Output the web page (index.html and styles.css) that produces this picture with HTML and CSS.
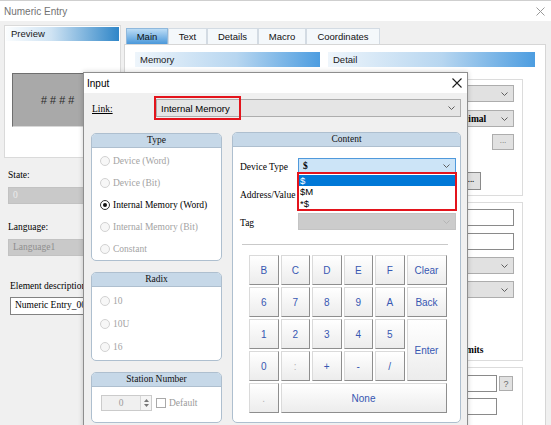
FILE: index.html
```html
<!DOCTYPE html>
<html>
<head>
<meta charset="utf-8">
<title>Numeric Entry</title>
<link rel="stylesheet" href="styles.css">
</head>
<body>
<div class="win">
  <div class="win-title">
    <span>Numeric Entry</span>
    <svg class="x-gray" width="9" height="9" viewBox="0 0 9 9"><path d="M0.5 0.5L8.5 8.5M8.5 0.5L0.5 8.5"/></svg>
  </div>
  <div class="win-body">
    <div class="side">
      <div class="preview">
        <div class="grad-hdr">Preview</div>
        <div class="preview-box">####</div>
      </div>
      <div class="f-label first">State:</div>
      <div class="f-input gray light">0</div>
      <div class="f-label">Language:</div>
      <div class="f-input gray">Language1</div>
      <div class="f-label desc">Element description:</div>
      <div class="f-input white">Numeric Entry_001</div>
    </div>
    <div class="main">
      <div class="tabs">
        <div class="tab active t-main">Main</div>
        <div class="tab t-text">Text</div>
        <div class="tab t-details">Details</div>
        <div class="tab t-macro">Macro</div>
        <div class="tab t-coord">Coordinates</div>
      </div>
      <div class="panel">
        <div class="col">
          <div class="sec-hdr">Memory</div>
        </div>
        <div class="col">
          <div class="sec-hdr">Detail</div>
          <div class="gbox box-a">
            <div class="row"><div class="dd wide"><span></span><svg class="chev" viewBox="0 0 7 4"><path d="M0.5 0.5L3.5 3.5L6.5 0.5"/></svg></div></div>
            <div class="row r2"><div class="dd narrow"><span class="ddt">Decimal</span><svg class="chev" viewBox="0 0 7 4"><path d="M0.5 0.5L3.5 3.5L6.5 0.5"/></svg></div></div>
            <div class="row r3"><div class="btn dots">...</div></div>
            <div class="row r4"><div class="btn dots small">...</div></div>
          </div>
          <div class="gbox box-b">
            <div class="row"><div class="txt wide"></div></div>
            <div class="row r2b"><div class="txt wide"></div></div>
            <div class="row r2b"><div class="dd wide"><span></span><svg class="chev" viewBox="0 0 7 4"><path d="M0.5 0.5L3.5 3.5L6.5 0.5"/></svg></div></div>
            <div class="row r2b"><div class="dd wide"><span></span><svg class="chev" viewBox="0 0 7 4"><path d="M0.5 0.5L3.5 3.5L6.5 0.5"/></svg></div></div>
            <div class="row lim"><span class="lim-t">Limits</span></div>
          </div>
          <div class="gbox box-c">
            <div class="row rc1"><div class="txt mid"></div><div class="btn q">?</div></div>
            <div class="row rc2"><div class="txt mid"></div></div>
          </div>
        </div>
      </div>
    </div>
  </div>
</div>

<div class="dlg">
  <div class="dlg-title">
    <span>Input</span>
    <svg class="x-dark" width="10" height="10" viewBox="0 0 10 10"><path d="M0.5 0.5L9.5 9.5M9.5 0.5L0.5 9.5"/></svg>
  </div>
  <div class="dlg-body">
    <div class="link-row">
      <span class="link-label">Link:</span>
      <div class="dd link-dd"><span>Internal Memory</span><svg class="chev" viewBox="0 0 7 4"><path d="M0.5 0.5L3.5 3.5L6.5 0.5"/></svg></div>
      <div class="red-mark link-mark"></div>
    </div>
    <div class="groups">
      <div class="left-col">
        <div class="grp g-type">
          <div class="grp-hdr">Type</div>
          <div class="grp-body list">
            <div class="radio dis"><span class="rc"></span>Device (Word)</div>
            <div class="radio dis"><span class="rc"></span>Device (Bit)</div>
            <div class="radio on"><span class="rc"></span>Internal Memory (Word)</div>
            <div class="radio dis"><span class="rc"></span>Internal Memory (Bit)</div>
            <div class="radio dis"><span class="rc"></span>Constant</div>
          </div>
        </div>
        <div class="grp g-radix">
          <div class="grp-hdr">Radix</div>
          <div class="grp-body list2">
            <div class="radio dis r23"><span class="rc"></span>10</div>
            <div class="radio dis r23"><span class="rc"></span>10U</div>
            <div class="radio dis r23"><span class="rc"></span>16</div>
          </div>
        </div>
        <div class="grp g-station">
          <div class="grp-hdr">Station Number</div>
          <div class="grp-body station">
            <div class="spin">
              <span class="spin-v">0</span>
              <span class="spin-btns">
                <svg width="5" height="3" viewBox="0 0 5 3"><path d="M0 3L2.5 0L5 3Z"/></svg>
                <svg width="5" height="3" viewBox="0 0 5 3"><path d="M0 0L2.5 3L5 0Z"/></svg>
              </span>
            </div>
            <span class="chk"></span>
            <span class="chk-l">Default</span>
          </div>
        </div>
      </div>
      <div class="grp g-content">
        <div class="grp-hdr">Content</div>
        <div class="grp-body content">
          <div class="c-row">
            <span class="c-label">Device Type</span>
            <div class="dd blue-dd">
              <span>$</span><svg class="chev" viewBox="0 0 7 4"><path d="M0.5 0.5L3.5 3.5L6.5 0.5"/></svg>
              <div class="dd-list">
                <div class="opt sel">$</div>
                <div class="opt">$M</div>
                <div class="opt">*$</div>
              </div>
            </div>
          </div>
          <div class="c-row">
            <span class="c-label">Address/Value</span>
            <div class="txt c-input"></div>
          </div>
          <div class="c-row">
            <span class="c-label">Tag</span>
            <div class="dd tag-dd"><span></span><svg class="chev light" viewBox="0 0 7 4"><path d="M0.5 0.5L3.5 3.5L6.5 0.5"/></svg></div>
          </div>
          <div class="sep"></div>
          <div class="keys">
            <div class="k">B</div><div class="k">C</div><div class="k">D</div><div class="k">E</div><div class="k">F</div><div class="k">Clear</div>
            <div class="k">6</div><div class="k">7</div><div class="k">8</div><div class="k">9</div><div class="k">A</div><div class="k">Back</div>
            <div class="k">1</div><div class="k">2</div><div class="k">3</div><div class="k">4</div><div class="k">5</div><div class="k enter">Enter</div>
            <div class="k">0</div><div class="k off">:</div><div class="k">+</div><div class="k">-</div><div class="k">/</div>
            <div class="k off">.</div><div class="k none">None</div>
          </div>
        </div>
      </div>
    </div>
  </div>
</div>
</body>
</html>
```

FILE: styles.css
```css
* { box-sizing: border-box; }
html, body { margin: 0; padding: 0; }
body {
  width: 551px;
  height: 425px;
  overflow: hidden;
  position: relative;
  background: #f0f0f0;
  font-family: "Liberation Sans", Arial, sans-serif;
  font-size: 9.5px;
  color: #000;
}

/* ---------- background window ---------- */
.win { height: 425px; display: flex; flex-direction: column; }
.win-title {
  height: 21px;
  flex: none;
  background: #fff;
  border-top: 1px solid #cfcfcf;
  display: flex;
  align-items: center;
  justify-content: space-between;
  padding: 0 6px 0 4px;
  color: #727272;
  font-size: 10px;
}
.x-gray path { stroke: #9a9a9a; stroke-width: 1; fill: none; }
.x-dark path { stroke: #1e1e1e; stroke-width: 1.1; fill: none; }

.win-body { flex: 1; display: flex; gap: 3px; padding: 4px 5px 0 4px; }

.side { width: 117px; flex: none; display: flex; flex-direction: column; }
.preview {
  height: 133px;
  background: #fff;
  border: 1px solid #dadada;
  padding: 1px;
}
.grad-hdr {
  height: 14px;
  line-height: 14px;
  padding-left: 5px;
  background: linear-gradient(to right, #fbfdfe 0%, #cfe3f3 40%, #2f86c8 100%);
  color: #1a1a1a;
}
.preview-box {
  margin: 32px 0 0 6px;
  width: 90px;
  height: 54px;
  background: #a9a9a9;
  border: 1px solid #6f6f6f;
  border-right-color: #d8d8d8;
  border-bottom-color: #d8d8d8;
  display: flex;
  align-items: center;
  justify-content: center;
  font-style: italic;
  font-size: 11px;
  letter-spacing: 3px;
  color: #2a2a2a;
  padding-left: 4px;
}
.f-label {
  font-family: "Liberation Serif", "Times New Roman", serif;
  height: 12px;
  line-height: 12px;
  margin: 17px 0 0 4px;
}
.f-label.first { margin-top: 11px; }
.f-label.desc { margin-top: 24px; margin-left: 6px; }
.f-input {
  font-family: "Liberation Serif", "Times New Roman", serif;
  height: 17px;
  line-height: 15px;
  margin: 6px 0 0 4px;
  padding-left: 4px;
}
.f-input.gray { background: #c9c9c9; color: #8e8e8e; border: 1px solid #c2c2c2; }
.f-input.gray.light { color: #ececec; }
.f-input.white { background: #fff; border: 1px solid #828282; height: 18px; margin-left: 6px; margin-top: 5px; }

.main { flex: 1; display: flex; flex-direction: column; padding-top: 3px; }
.tabs { display: flex; height: 16px; margin-left: 2px; }
.tab {
  height: 16px;
  line-height: 15px;
  text-align: center;
  background: #f4f8fb;
  border: 1px solid #d3dbe3;
  border-bottom: none;
  color: #111;
}
.tab.active {
  background: linear-gradient(#bcdcf5, #4a98da);
  border-color: #8fb8dc;
}
.t-main { width: 42px; }
.t-text { width: 39px; }
.t-details { width: 51px; }
.t-macro { width: 48px; }
.t-coord { width: 74px; }

.panel {
  flex: 1;
  background: #fff;
  border: 1px solid #d6d6d6;
  display: grid;
  grid-template-columns: 185px 207px;
  column-gap: 8px;
  align-items: start;
  padding: 7px 10px 0 10px;
}
.col { display: flex; flex-direction: column; }
.sec-hdr {
  height: 15px;
  line-height: 15px;
  padding-left: 5px;
  background: linear-gradient(to right, #eef5fb 0%, #b7d6f0 55%, #4d9de0 100%);
  color: #1a1a1a;
}
.gbox {
  margin: 6px 12px 0 8px;
  border: 1px solid #dcdcdc;
  background: #fff;
  display: flex;
  flex-direction: column;
  padding: 5px 8px 0 0;
}
.box-a { margin-top: 12px; height: 117px; }
.box-b { height: 159px; padding-top: 6px; }
.box-c { height: 70px; padding-top: 7px; }
.row { display: flex; justify-content: flex-end; align-items: center; }
.r2 { margin-top: 8px; }
.r3 { margin-top: 7px; }
.r4 { margin-top: 22px; padding-right: 33px; }
.r2b { margin-top: 7px; }
.lim { margin-top: 46px; justify-content: flex-start; padding-left: 120px; }
.lim-t { font-family: "Liberation Serif", serif; font-weight: bold; line-height: 12px; }
.rc1 { gap: 2px; padding-right: 1px; }
.rc2 { margin-top: 6px; padding-right: 17px; }

.dd {
  display: flex;
  align-items: center;
  justify-content: space-between;
  height: 17px;
  background: #e1e1e1;
  border: 1px solid #adadad;
  padding: 0 5px 0 3px;
  position: relative;
}
.dd.wide { width: 150px; }
.dd.narrow { width: 65px; padding-left: 3px; }
.ddt { font-family: "Liberation Serif", serif; font-weight: bold; }
.chev { width: 7px; height: 4px; flex: none; }
.chev path { fill: none; stroke: #5e5e5e; stroke-width: 1; }
.chev.light path { stroke: #b5b5b5; }
.txt { height: 17px; background: #fff; border: 1px solid #8a8a8a; }
.txt.wide { width: 150px; }
.txt.mid { width: 130px; height: 17px; }
.btn {
  display: flex;
  align-items: center;
  justify-content: center;
  background: #e1e1e1;
  border: 1px solid #adadad;
  color: #6a6a6a;
}
.btn.dots { width: 22px; height: 16px; font-size: 8px; padding-bottom: 3px; }
.btn.dots.small { width: 20px; height: 18px; color: #333; font-weight: bold; border-color: #8a8a8a; }
.btn.q { width: 14px; height: 15px; font-size: 9px; }

/* ---------- Input dialog ---------- */
.dlg {
  position: absolute;
  left: 83px;
  top: 72px;
  width: 385px;
  height: 370px;
  background: #f0f0f0;
  border: 1px solid #8e8e8e;
  box-shadow: 0 0 5px rgba(0, 0, 0, 0.2);
  display: flex;
  flex-direction: column;
}
.dlg-title {
  height: 20px;
  flex: none;
  background: #fff;
  display: flex;
  align-items: center;
  justify-content: space-between;
  padding: 0 5px 0 3px;
  font-size: 10px;
}
.dlg-body { padding: 6px 6px 0 7px; display: flex; flex-direction: column; }
.link-row { display: flex; align-items: center; height: 18px; position: relative; }
.link-label {
  width: 65px;
  padding-left: 1px;
  font-family: "Liberation Serif", serif;
  text-decoration: underline;
  padding-top: 2px;
}
.link-dd { flex: 1; height: 18px; background: #e5e5e5; padding-left: 4px; }
.red-mark {
  position: absolute;
  border: 2px solid #e3141c;
  pointer-events: none;
}
.link-mark { left: 63px; top: -3px; width: 87px; height: 24px; }

.groups { display: flex; gap: 10px; margin-top: 15px; align-items: flex-start; }
.left-col { width: 131px; display: flex; flex-direction: column; gap: 11px; margin-top: 1px; }
.grp {
  background: #fff;
  border: 1px solid #aebfcf;
  border-radius: 5px;
  overflow: hidden;
  display: flex;
  flex-direction: column;
}
.grp-hdr {
  height: 14px;
  line-height: 13px;
  text-align: center;
  background: #c6d8e8;
  border-bottom: 1px solid #aebfcf;
  font-family: "Liberation Serif", serif;
  color: #111;
}
.grp-body { font-family: "Liberation Serif", serif; }
.g-type { height: 128px; }
.g-radix { height: 89px; }
.g-station { height: 51px; }
.g-content { width: 229px; height: 291px; }

.list { padding-top: 2px; }
.list2 { padding-top: 2px; }
.radio { height: 22px; display: flex; align-items: center; }
.radio.r23 { height: 23px; }
.rc {
  width: 10px;
  height: 10px;
  border-radius: 50%;
  margin: 0 3px 0 8px;
  border: 1px solid #d2d2d2;
  background: #f7f7f7;
  position: relative;
  flex: none;
}
.radio.dis { color: #a3a3a3; }
.radio.on .rc { border-color: #333; background: #fff; }
.radio.on .rc::after {
  content: "";
  position: absolute;
  left: 2px; top: 2px;
  width: 4px; height: 4px;
  border-radius: 50%;
  background: #111;
}

.station { display: flex; align-items: center; padding: 8px 0 0 9px; }
.spin {
  width: 51px;
  height: 16px;
  border: 1px solid #cbcbcb;
  background: #f0f0f0;
  display: flex;
  color: #9c9c9c;
}
.spin-v { flex: 1; text-align: center; line-height: 14px; }
.spin-btns {
  width: 11px;
  border-left: 1px solid #d6d6d6;
  display: flex;
  flex-direction: column;
  align-items: center;
  justify-content: center;
  gap: 2px;
  background: #f5f5f5;
}
.spin-btns path { fill: #777; }
.chk { width: 10px; height: 10px; border: 1px solid #a9a9a9; background: #fff; margin-left: 4px; }
.chk-l { margin-left: 3px; color: #9a9a9a; }

.content { padding: 10px 4px 0 7px; display: flex; flex-direction: column; }
.c-row { display: flex; align-items: center; height: 17px; margin-bottom: 11px; }
.c-label { width: 58px; flex: none; padding-top: 3px; white-space: nowrap; }
.blue-dd { flex: 1; height: 16px; background: #cce4f7; border-color: #4f99dc; padding-left: 4px; font-weight: bold; }
.c-input { flex: 1; }
.tag-dd { flex: 1; background: #cccccc; border-color: #c4c4c4; }
.dd-list {
  position: absolute;
  left: -2px;
  right: -2px;
  top: 13px;
  height: 39px;
  border: 2px solid #e3141c;
  background: #fff;
  padding: 1px 0;
  font-weight: normal;
  font-family: "Liberation Sans", Arial, sans-serif;
  z-index: 2;
}
.opt { height: 11.5px; line-height: 11.5px; padding-left: 1px; }
.opt.sel { background: #0078d7; color: #fff; }

.sep { height: 1px; background: #c9c9c9; margin: 3px 8px 0 2px; }
.keys {
  margin: 10px 0 0 9px;
  display: grid;
  grid-template-columns: repeat(5, 29.5px) 40px;
  grid-template-rows: repeat(5, 30px);
  gap: 2px;
}
.k {
  display: flex;
  align-items: center;
  justify-content: center;
  background: linear-gradient(#ffffff, #ececec);
  border: 1px solid #dadada;
  border-right-color: #8e8e8e;
  border-bottom-color: #8e8e8e;
  color: #3757b2;
  font-family: "Liberation Sans", Arial, sans-serif;
  font-size: 10px;
}
.k.off { color: #b3b3b3; }
.k.enter { grid-column: 6; grid-row: 3 / span 2; }
.k.none { grid-column: 2 / span 5; }
```
